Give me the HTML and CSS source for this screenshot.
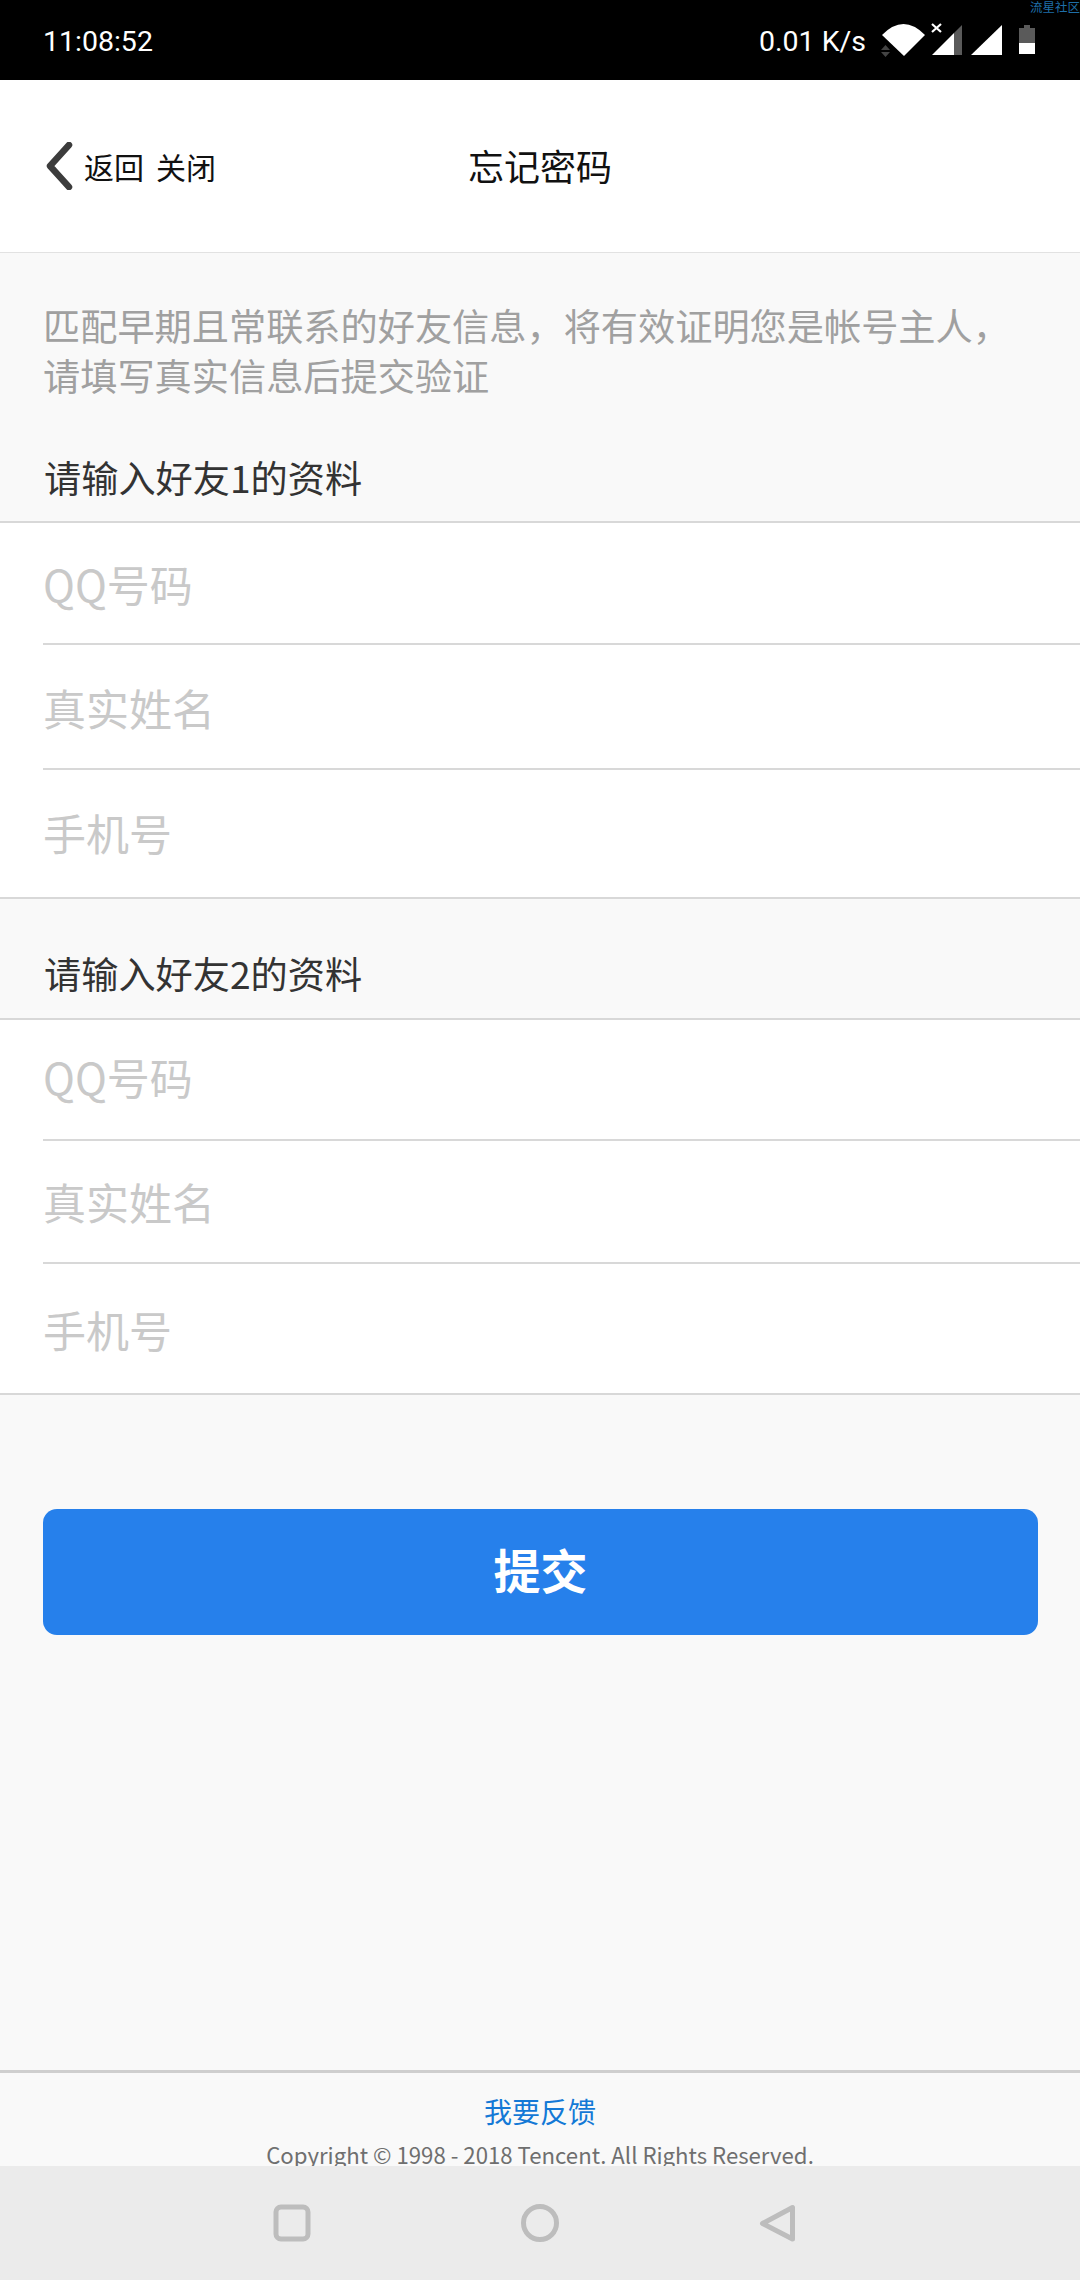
FILE: index.html
```html
<!DOCTYPE html>
<html lang="zh-CN">
<head>
<meta charset="utf-8">
<title>忘记密码</title>
<link rel="stylesheet" href="styles.css">
</head>
<body>
<div class="screen">
  <header class="status">
    <span class="watermark">流星社区</span>
    <span class="time">11:08:52</span>
    <div class="status-right">
      <span class="speed">0.01 K/s</span>
      <svg class="status-icons" width="160" height="40" viewBox="0 0 160 40">
        <path d="M2 15 Q23.5 -7 45 15 L24 36 Z" fill="#fff"/>
        <path d="M5.5 25 L1 30 L10 30 Z M1 32 L10 32 L5.500 37 Z" fill="#444"/>
        <path d="M52 4 L61 12 M61 4 L52 12" stroke="#fff" stroke-width="2.200" fill="none"/>
        <path d="M52 35 L74 13 L74 35 Z" fill="#fff"/>
        <path d="M74 13 L82 5 L82 35 L74 35 Z" fill="#5a5a5a"/>
        <path d="M91 35 L122 5 L122 35 Z" fill="#fff"/>
        <path d="M144 5 L150 5 L150 8 L155 8 L155 23 L139 23 L139 8 L144 8 Z" fill="#5a5a5a"/>
        <rect x="139" y="23" width="16" height="11" fill="#fff"/>
      </svg>
    </div>
  </header>
  <nav class="navbar">
    <div class="nav-left">
      <svg class="back" width="28" height="48" viewBox="0 0 28 48"><path d="M24 3 L5 24 L24 45" fill="none" stroke="#3c3c3c" stroke-width="6.500" stroke-linecap="round" stroke-linejoin="round"/></svg>
      <span class="nav-link">返回</span>
      <span class="nav-link">关闭</span>
    </div>
    <h1 class="nav-title">忘记密码</h1>
  </nav>
  <main class="content">
    <p class="intro">匹配早期且常联系的好友信息&#xFF0C;将有效证明您是帐号主人&#xFF0C;<br>请填写真实信息后提交验证</p>
    <h2 class="section-label first">请输入好友1的资料</h2>
    <div class="group group-one">
      <div class="row">QQ号码</div>
      <div class="row">真实姓名</div>
      <div class="row">手机号</div>
    </div>
    <h2 class="section-label">请输入好友2的资料</h2>
    <div class="group group-two">
      <div class="row">QQ号码</div>
      <div class="row">真实姓名</div>
      <div class="row">手机号</div>
    </div>
    <button class="submit">提交</button>
  </main>
  <footer class="footer">
    <a class="feedback">我要反馈</a>
    <p class="copyright">Copyright © 1998 - 2018 Tencent. All Rights Reserved.</p>
  </footer>
  <div class="sysnav">
    <svg width="38" height="38" viewBox="0 0 38 38"><rect x="3" y="3" width="32" height="32" rx="5" fill="none" stroke="#bdbdbd" stroke-width="5"/></svg>
    <svg width="38" height="38" viewBox="0 0 38 38"><circle cx="19" cy="19" r="16.500" fill="none" stroke="#bdbdbd" stroke-width="5"/></svg>
    <svg class="sys-back" width="38" height="38" viewBox="0 0 38 38"><path d="M33.500 3.500 L33.500 35 L3.500 19.500 Z" fill="none" stroke="#bdbdbd" stroke-width="5" stroke-linejoin="round"/></svg>
  </div>
</div>
</body>
</html>
```
FILE: styles.css
```css
* { box-sizing: border-box; }
html, body { margin: 0; padding: 0; }
body { font-family: "Noto Sans CJK SC", "Noto Sans", sans-serif; background: #f9f9f9; }
.screen { width: 1080px; height: 2280px; display: flex; flex-direction: column; overflow: hidden; position: relative; }

.status { height: 80px; flex: none; background: #000; color: #fff; display: flex; align-items: center; justify-content: space-between; padding: 2px 40px 0 43px; position: relative; font-family: Roboto, sans-serif; font-size: 28.500px; }
.watermark { position: absolute; top: 0; right: 0; font-size: 12.500px; color: #1f6fa8; font-family: "Noto Sans CJK SC", sans-serif; line-height: 14px; }
.status-right { display: flex; align-items: center; gap: 14px; }
.status-icons { display: block; margin-top: -2px; }

.navbar { height: 173px; flex: none; background: #fff; border-bottom: 1px solid #e2e2e2; display: flex; align-items: center; padding-left: 45px; position: relative; }
.nav-left { display: flex; align-items: center; }
.back { margin-right: 11px; }
.nav-link { font-size: 30px; color: #111; margin-right: 12px; }
.nav-title { position: absolute; left: 0; right: 0; text-align: center; margin: -2px 0 0; font-size: 36px; font-weight: 400; color: #111; }

.content { flex: 1; background: #f9f9f9; }
.intro { margin: 0; padding: 47px 0 0 43px; font-size: 37.200px; line-height: 50px; color: #a0a0a0; }
.section-label { margin: 0; padding: 0 0 20px 44px; height: 119px; display: flex; align-items: flex-end; font-size: 37.200px; line-height: 50px; font-weight: 400; color: #333; }
.section-label.first { height: 121px; padding-bottom: 19px; }

.group { background: #fff; border-top: 2px solid #d8d8d8; border-bottom: 2px solid #d8d8d8; }
.row { margin-left: 43px; border-bottom: 2px solid #d8d8d8; display: flex; align-items: center; font-size: 43px; color: #c9c9c9; }
.row:last-child { border-bottom: 0; }
.group-one .row:nth-child(1) { height: 122px; }
.group-one .row:nth-child(2) { height: 125px; }
.group-one .row:nth-child(3) { height: 127px; padding-bottom: 3px; }
.group-two .row:nth-child(1) { height: 121px; padding-bottom: 7px; }
.group-two .row:nth-child(2) { height: 123px; padding-bottom: 1px; }
.group-two .row:nth-child(3) { height: 129px; }

.submit { display: block; width: 995px; height: 126px; margin: 114px 0 0 43px; padding: 0 0 8px; border: 0; border-radius: 14px; background: #2680eb; color: #fff; font: 700 47px "Noto Sans CJK SC", sans-serif; }

.footer { height: 96px; flex: none; border-top: 3px solid #cfcfcf; overflow: hidden; text-align: center; background: #f9f9f9; }
.feedback { display: block; margin-top: 18px; font-size: 28px; line-height: 40px; color: #1479d6; }
.copyright { margin: 6px 0 0; font-size: 22.200px; line-height: 34px; color: #6f6f6f; }

.sysnav { height: 114px; flex: none; background: #ebebeb; display: flex; align-items: center; gap: 210px; padding-left: 273px; }
.sys-back { margin-left: -10px; }
```
